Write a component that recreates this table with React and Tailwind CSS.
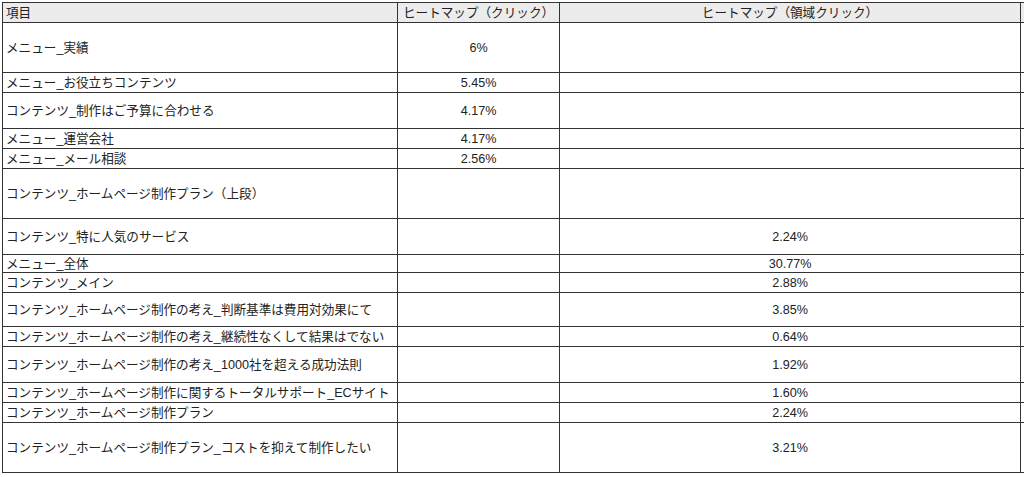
// App.jsx
const rows = [
  ['メニュー_実績', '6%', '', 50],
  ['メニュー_お役立ちコンテンツ', '5.45%', '', 20],
  ['コンテンツ_制作はご予算に合わせる', '4.17%', '', 36],
  ['メニュー_運営会社', '4.17%', '', 20],
  ['メニュー_メール相談', '2.56%', '', 20],
  ['コンテンツ_ホームページ制作プラン（上段）', '', '', 50],
  ['コンテンツ_特に人気のサービス', '', '2.24%', 36],
  ['メニュー_全体', '', '30.77%', 18],
  ['コンテンツ_メイン', '', '2.88%', 20],
  ['コンテンツ_ホームページ制作の考え_判断基準は費用対効果にて', '', '3.85%', 34],
  ['コンテンツ_ホームページ制作の考え_継続性なくして結果はでない', '', '0.64%', 20],
  ['コンテンツ_ホームページ制作の考え_1000社を超える成功法則', '', '1.92%', 36],
  ['コンテンツ_ホームページ制作に関するトータルサポート_ECサイト', '', '1.60%', 20],
  ['コンテンツ_ホームページ制作プラン', '', '2.24%', 20],
  ['コンテンツ_ホームページ制作プラン_コストを抑えて制作したい', '', '3.21%', 50],
];

const cell = 'border border-[#333] px-[3px] py-0 leading-[16px] align-middle';

export default function App() {
  return (
    <div className="w-[1024px] h-[477px] overflow-hidden bg-white pt-[2px] pl-[2px] font-['Liberation_Sans','Noto_Sans_CJK_JP',sans-serif] text-[12.6px] text-[#222]">
      <table className="border-collapse table-fixed w-[1120px]">
        <colgroup>
          <col className="w-[395px]" />
          <col className="w-[162px]" />
          <col className="w-[461px]" />
          <col className="w-[102px]" />
        </colgroup>
        <thead>
          <tr className="bg-[#ececec]">
            <th className={`${cell} h-[20px] text-left font-normal`}>項目</th>
            <th className={`${cell} h-[20px] text-center font-normal`}>ヒートマップ（クリック）</th>
            <th className={`${cell} h-[20px] text-center font-normal`}>ヒートマップ（領域クリック）</th>
            <th className={`${cell} h-[20px] font-normal`}></th>
          </tr>
        </thead>
        <tbody>
          {rows.map(([name, click, area, h]) => (
            <tr key={name}>
              <td className={`${cell} text-left whitespace-nowrap`} style={{ height: h }}>{name}</td>
              <td className={`${cell} text-center`}>{click}</td>
              <td className={`${cell} text-center`}>{area}</td>
              <td className={cell}></td>
            </tr>
          ))}
        </tbody>
      </table>
    </div>
  );
}
